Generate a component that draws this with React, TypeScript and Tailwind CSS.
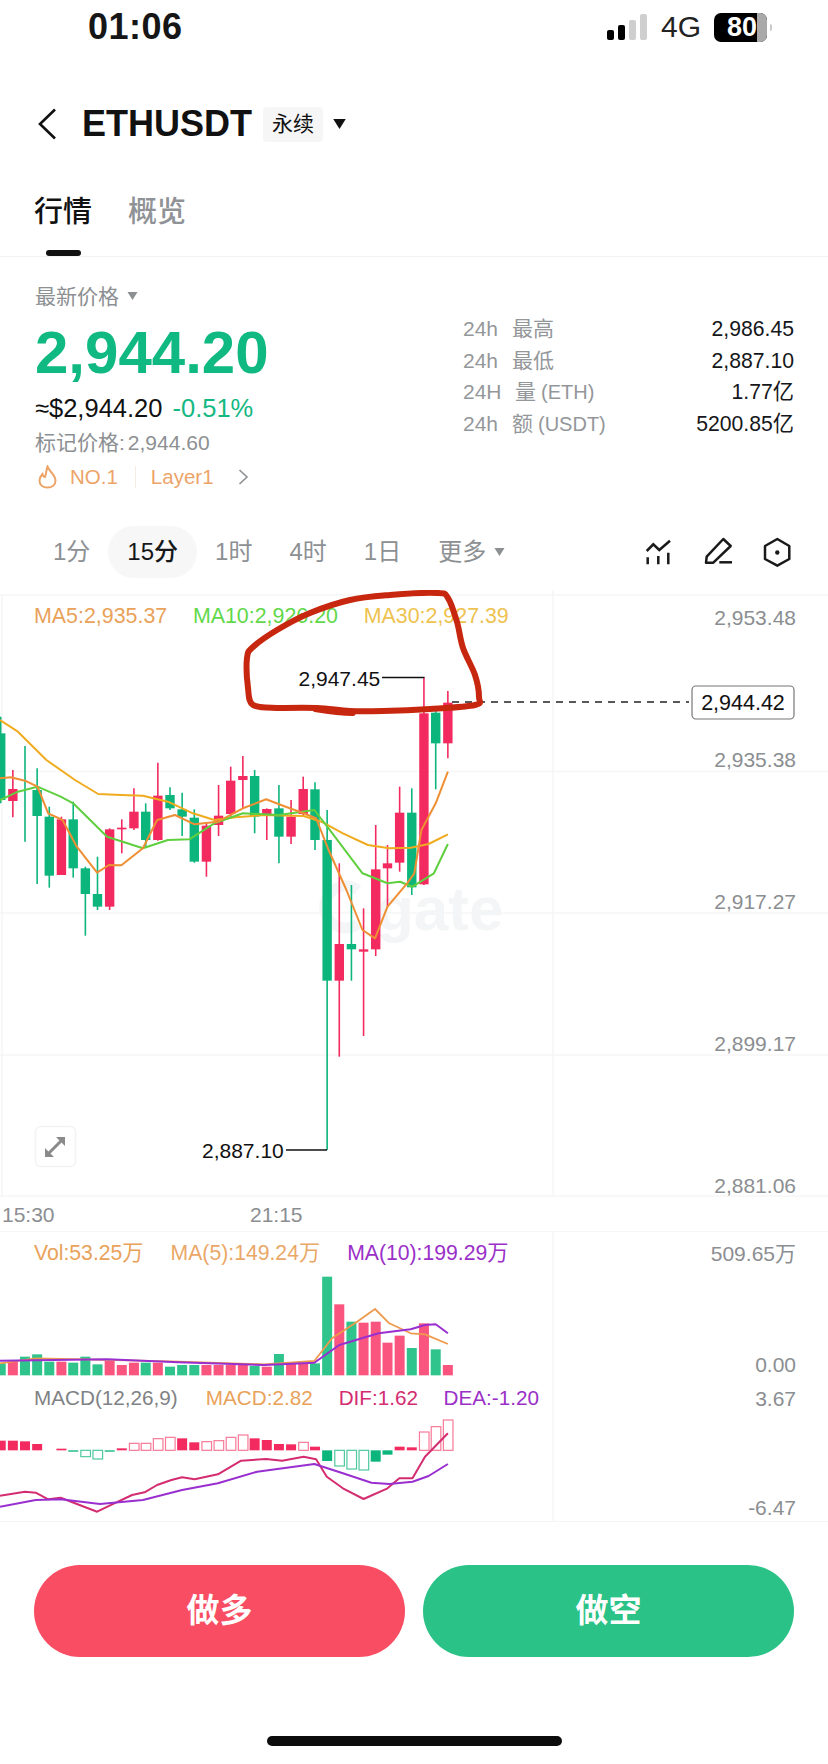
const G = "#10b981";
const GC = "#0cb57c";
const RC = "#f32a5f";

type C = [number, "R" | "G", number, number, number, number];
// x, colour, wick top, wick bottom, body top, body bottom (in chart units)
const candles: C[] = [
  [2, "G", 380, 640, 430, 630], [36, "R", 540, 682, 597, 633], [70, "G", 468, 755, 600, 600],
  [104, "G", 535, 882, 600, 678], [138, "G", 650, 893, 680, 857], [172, "R", 680, 855, 688, 855],
  [205, "G", 635, 863, 688, 835], [239, "G", 830, 1037, 835, 912], [273, "G", 800, 960, 912, 950],
  [307, "R", 715, 960, 718, 950], [341, "R", 688, 790, 713, 718], [375, "R", 595, 720, 665, 715],
  [408, "G", 640, 770, 665, 750], [442, "R", 518, 752, 617, 750], [476, "G", 592, 660, 615, 655],
  [510, "G", 608, 738, 658, 680], [544, "G", 658, 818, 683, 815], [578, "R", 700, 860, 707, 815],
  [612, "R", 585, 738, 677, 705], [646, "R", 530, 680, 572, 672], [680, "R", 498, 655, 558, 570],
  [713, "G", 540, 730, 558, 680], [747, "R", 655, 750, 657, 678], [781, "G", 585, 820, 655, 740],
  [815, "R", 630, 762, 680, 740], [849, "R", 560, 680, 597, 672], [882, "G", 577, 780, 598, 750],
  [916, "G", 660, 1680, 750, 1172], [950, "R", 820, 1400, 1062, 1172], [984, "G", 885, 1172, 1062, 1078],
  [1018, "R", 955, 1338, 1078, 1085], [1052, "R", 705, 1098, 838, 1078], [1085, "R", 765, 950, 820, 835],
  [1119, "R", 590, 845, 668, 818], [1153, "G", 595, 915, 668, 892], [1187, "R", 262, 885, 370, 883],
  [1220, "G", 350, 598, 368, 460], [1254, "R", 303, 505, 338, 460],
];
const ma30 = [[0, 390], [50, 425], [130, 510], [210, 570], [275, 612], [340, 615], [400, 617], [470, 635], [540, 670], [600, 690], [660, 682], [740, 675], [850, 678], [900, 695], [960, 730], [1030, 765], [1090, 775], [1150, 773], [1200, 762], [1254, 733]];
const ma5 = [[0, 565], [30, 562], [70, 572], [105, 590], [135, 670], [175, 690], [215, 770], [272, 848], [305, 825], [340, 826], [400, 775], [440, 690], [490, 675], [545, 703], [610, 695], [680, 655], [745, 628], [800, 650], [850, 670], [885, 685], [920, 780], [970, 900], [1015, 1020], [1050, 1045], [1085, 950], [1140, 880], [1160, 850], [1180, 720], [1220, 640], [1254, 545]];
const ma10 = [[0, 630], [50, 605], [105, 590], [170, 620], [205, 640], [300, 740], [400, 775], [470, 750], [530, 748], [600, 700], [680, 670], [780, 675], [880, 660], [920, 715], [1015, 850], [1085, 880], [1120, 875], [1155, 890], [1215, 850], [1254, 762]];
// Hand-drawn loop, in page pixels
const loop = [[277, 708], [253, 705], [248, 688], [247, 658], [253, 647], [277, 630], [310, 613], [350, 600], [390, 595], [437, 593], [448, 598], [457, 622], [463, 648], [475, 675], [479, 697], [475, 705], [430, 709], [383, 711], [350, 711], [317, 708], [277, 708]];

const vol: [number, "R" | "G", number][] = [
  [2, "G", 400], [36, "R", 395], [70, "G", 380], [104, "G", 373], [138, "G", 395], [172, "R", 395], [205, "G", 398], [239, "G", 380], [273, "G", 403], [307, "R", 393], [341, "R", 405], [375, "R", 398], [408, "G", 398], [442, "R", 398], [476, "G", 410], [510, "G", 405], [544, "G", 405], [578, "R", 405], [612, "R", 405], [646, "R", 405], [680, "R", 405], [713, "G", 408], [747, "R", 410], [781, "G", 372], [815, "R", 400], [849, "R", 400], [882, "G", 400], [916, "G", 140], [950, "R", 223], [984, "G", 275], [1018, "R", 278], [1052, "R", 275], [1085, "R", 338], [1119, "R", 317], [1153, "G", 354], [1187, "R", 280], [1220, "G", 358], [1254, "R", 405],
];
const volMa5 = [[0, 400], [100, 385], [240, 388], [500, 395], [740, 403], [880, 393], [930, 325], [1000, 275], [1050, 237], [1090, 280], [1150, 310], [1190, 313], [1254, 342]];
const volMa10 = [[0, 392], [300, 388], [500, 397], [740, 405], [880, 398], [950, 345], [1060, 310], [1150, 298], [1190, 285], [1220, 283], [1254, 310]];

const macd: [number, "R" | "G", number, boolean][] = [
  [2, "R", 632, true], [36, "R", 632, true], [70, "R", 634, true], [104, "R", 642, true], [172, "R", 656, true], [205, "G", 665, true], [239, "G", 680, false], [273, "G", 687, false], [307, "G", 665, true], [341, "R", 655, true], [375, "R", 640, false], [408, "R", 640, false], [442, "R", 626, false], [476, "R", 622, false], [510, "R", 625, true], [544, "R", 637, true], [578, "R", 635, false], [612, "R", 632, false], [646, "R", 622, false], [680, "R", 615, false], [713, "R", 625, true], [747, "R", 630, true], [781, "R", 642, true], [815, "R", 643, true], [849, "R", 637, false], [882, "R", 650, true], [916, "G", 693, true], [950, "G", 708, false], [984, "G", 717, false], [1018, "G", 720, false], [1052, "G", 695, true], [1085, "G", 674, true], [1119, "R", 650, true], [1153, "R", 652, true], [1187, "R", 606, false], [1220, "R", 590, false], [1254, "R", 570, false],
];
const dif = [[0, 797], [70, 785], [100, 788], [135, 808], [170, 803], [210, 820], [272, 845], [320, 820], [370, 795], [405, 787], [440, 765], [480, 750], [510, 742], [545, 748], [610, 733], [675, 692], [745, 687], [790, 692], [850, 680], [885, 688], [915, 740], [960, 775], [1018, 807], [1085, 775], [1118, 745], [1155, 745], [1190, 680], [1254, 610]];
const dea = [[0, 830], [100, 810], [170, 808], [280, 822], [400, 810], [510, 780], [610, 760], [720, 725], [880, 702], [960, 730], [1040, 758], [1090, 762], [1155, 755], [1200, 738], [1254, 702]];

const X = (x: number) => x / 2.8;
const pts = (a: number[][], y0: number) => a.map(([x, y]) => `${X(x).toFixed(1)},${(y / 3 + y0).toFixed(1)}`).join(" ");

// Catmull-Rom curve through the points, for smooth hand-drawn strokes
function smooth(p: number[][]) {
  let d = `M${p[0][0]} ${p[0][1]}`;
  for (let i = 0; i < p.length - 1; i++) {
    const a = p[Math.max(i - 1, 0)];
    const b = p[i];
    const c = p[i + 1];
    const e = p[Math.min(i + 2, p.length - 1)];
    d += `C${(b[0] + (c[0] - a[0]) / 6).toFixed(1)} ${(b[1] + (c[1] - a[1]) / 6).toFixed(1)} ${(c[0] - (e[0] - b[0]) / 6).toFixed(1)} ${(c[1] - (e[1] - b[1]) / 6).toFixed(1)} ${c[0]} ${c[1]}`;
  }
  return d;
}

function Tri({ w, h, color }: { w: number; h: number; color: string }) {
  return (
    <svg width={w} height={h} viewBox="0 0 10 8" className="shrink-0">
      <path d="M0 0H10L5 8Z" fill={color} />
    </svg>
  );
}

function AxisLabel({ y, children }: { y: number; children: string }) {
  return (
    <text x={796} y={y + 7.5} textAnchor="end" fontSize={21} fill="#8b8e91">
      {children}
    </text>
  );
}

function StatRow({ a, b, c, v, wide }: { a: string; b: string; c?: string; v: string; wide?: boolean }) {
  return (
    <div className="flex h-[31.67px] items-center text-[21px] text-[#94979a]">
      <span className={wide ? "w-[52px]" : "w-[49px]"}>{a}</span>
      <span>{b}</span>
      {c && <span className="ml-[5px] text-[20px]">{c}</span>}
      <span className="ml-auto text-[21.2px] text-[#15171a]">{v}</span>
    </div>
  );
}

export default function App() {
  return (
    <div className="relative h-[1764px] w-[828px] overflow-hidden bg-white font-['Liberation_Sans','Noto_Sans_CJK_SC',sans-serif] text-[#111]">
      {/* Status bar */}
      <div className="flex h-[54px] items-center pl-[88px] pr-[56px]">
        <span className="text-[36px] font-bold leading-none tracking-[0.5px] text-[#161616]">01:06</span>
        <div className="ml-auto flex items-end gap-[4px] self-center">
          <span className="h-[10px] w-[7px] rounded-[2px] bg-black" />
          <span className="h-[15px] w-[7px] rounded-[2px] bg-black" />
          <span className="h-[20px] w-[7px] rounded-[2px] bg-[#cfcfcf]" />
          <span className="h-[26px] w-[7px] rounded-[2px] bg-[#cfcfcf]" />
        </div>
        <span className="ml-[14px] text-[30px] leading-none text-[#222]">4G</span>
        <div className="ml-[13px] flex h-[29px] w-[53px] items-center overflow-hidden rounded-[7px] bg-black">
          <span className="flex w-[43px] justify-end text-[27px] font-bold leading-none text-white">80</span>
          <span className="ml-auto h-full w-[10px] bg-[#a9a9a9]" />
        </div>
        <span className="ml-[3px] h-[7px] w-[2px] rounded-r bg-[#c9c9c9]" />
      </div>

      {/* Header */}
      <div className="flex h-[140px] items-center pl-[37px]">
        <svg width="20" height="32" viewBox="0 0 20 32" fill="none">
          <path d="M18 1.500 3 16l15 14.500" stroke="#111" strokeWidth="2.600" />
        </svg>
        <span className="ml-[25px] text-[36px] font-bold leading-none">ETHUSDT</span>
        <span className="ml-[11px] flex h-[35px] w-[60px] items-center justify-center rounded-[4px] bg-[#f6f6f6] text-[21px]">永续</span>
        <span className="ml-[9px]">
          <Tri w={15} h={10} color="#111" />
        </span>
      </div>

      {/* Tabs */}
      <div className="h-[63px] border-b border-[#f3f3f3]">
        <div className="flex gap-[36px] pl-[34px] text-[29px] leading-[36px]">
          <div className="flex flex-col items-center">
            <span className="font-medium">行情</span>
            <span className="mt-[20px] h-[6px] w-[35px] rounded-[3px] bg-[#111]" />
          </div>
          <span className="font-medium text-[#8f9296]">概览</span>
        </div>
      </div>

      {/* Price info */}
      <div className="flex h-[233px]">
        <div className="w-[428px] pl-[35px]">
          <div className="mt-[27px] flex h-[24px] items-center gap-[8px] text-[21px] leading-none text-[#8d9093]">
            最新价格
            <Tri w={11} h={8} color="#8d9093" />
          </div>
          <div className="mt-[15px] h-[60px] text-[60px] font-bold leading-[60px]" style={{ color: G }}>2,944.20</div>
          <div className="mt-[11px] flex h-[30px] items-center text-[25.500px] leading-none">
            <span>≈$2,944.20</span>
            <span className="ml-[10px] text-[#14b881]">-0.51%</span>
          </div>
          <div className="mt-[5px] flex h-[26px] items-center text-[21px] leading-none text-[#8d9093]">
            <span>标记价格:</span>
            <span className="ml-[3px]">2,944.60</span>
          </div>
          <div className="mt-[9px] flex h-[26px] items-center text-[20.500px] leading-none text-[#eda468]">
            <svg width="19" height="24" viewBox="0 0 19 24" fill="none" className="ml-[3px]">
              <path d="M9.500 1.500C10.500 6 17.500 9.500 17.500 15.500C17.500 20 14 22.500 9.500 22.500C5 22.500 1.500 20 1.500 15.500C1.500 12.500 3.200 10.500 4.500 9C5 11 6 12 7 12C8.500 9 8 5 9.500 1.500Z" stroke="#eda468" strokeWidth="2" />
            </svg>
            <span className="ml-[13px]">NO.1</span>
            <span className="ml-[17px] h-[22px] w-px bg-[#f5ece2]" />
            <span className="ml-[15px]">Layer1</span>
            <svg width="11" height="16" viewBox="0 0 11 16" fill="none" className="ml-[24px]">
              <path d="M1.500 1 9 8l-7.500 7" stroke="#8d9093" strokeWidth="1.600" />
            </svg>
          </div>
        </div>
        <div className="ml-[35px] mt-[56px] w-[331px]">
          <StatRow a="24h" b="最高" v="2,986.45" />
          <StatRow a="24h" b="最低" v="2,887.10" />
          <StatRow a="24H" b="量" c="(ETH)" v="1.77亿" wide />
          <StatRow a="24h" b="额" c="(USDT)" v="5200.85亿" />
        </div>
      </div>

      {/* Timeframes */}
      <div className="mt-[36px] flex h-[52px] items-center pl-[35px] text-[24px] leading-none text-[#8d9093]">
        <span className="px-[18px]">1分</span>
        <span className="flex h-[52px] items-center rounded-full bg-[#f7f7f7] px-[19px] font-medium text-[#15171a]">15分</span>
        <span className="px-[18px]">1时</span>
        <span className="ml-[1px] px-[18px]">4时</span>
        <span className="ml-[1px] px-[18px]">1日</span>
        <span className="flex items-center gap-[8px] pl-[19px]">
          更多
          <Tri w={11} h={8} color="#8d9093" />
        </span>
        <svg width="160" height="45" viewBox="640 530 160 45" fill="none" stroke="#1a1a1a" strokeWidth="2.500" className="ml-auto mr-[28px]">
          <path d="M646.700 551 653.300 544.300 659.300 550 670 540.700" />
          <path d="M647.700 557.300V564.300M658.300 556V564.300M668.300 552.700V564.300" />
          <path d="M706.700 556.700 723.300 539 730.700 546 713.300 562.700H706Z" strokeLinejoin="round" />
          <path d="M719.300 562.300H732" />
          <path d="M777.300 539 789.300 546V559L777.300 565.700 765 559V546Z" strokeLinejoin="round" />
          <circle cx="777.300" cy="552.500" r="2.200" fill="#1a1a1a" stroke="none" />
        </svg>
      </div>

      {/* Main chart */}
      <div className="relative mt-[12px] h-[607px]">
        <div className="flex h-[54px] items-center gap-[25.700px] pl-[34px] text-[21.400px] leading-none">
          <span className="text-[#e9a25a]">MA5:2,935.37</span>
          <span className="text-[#62d84a]">MA10:2,926.20</span>
          <span className="text-[#eec24f]">MA30:2,927.39</span>
        </div>
        <svg className="absolute inset-0" width="828" height="607" viewBox="0 590 828 607" fill="none">
          <g stroke="#f6f6f6" strokeWidth="1.500">
            <path d="M0 595H828M0 771.500H828M0 913H828M0 1055H828M0 1196H828M553 590V1197M2 595V1197" />
          </g>
          <text x="376" y="930" fontSize="62" fontWeight="700" fill="#f3f5f6">gate</text>
          <path d="M358 890a21 21 0 1 0 0 34" stroke="#f3f5f6" strokeWidth="11" />
          <AxisLabel y={617}>2,953.48</AxisLabel>
          <AxisLabel y={759}>2,935.38</AxisLabel>
          <AxisLabel y={901}>2,917.27</AxisLabel>
          <AxisLabel y={1043}>2,899.17</AxisLabel>
          <AxisLabel y={1185}>2,881.06</AxisLabel>
          {candles.map(([x, c, wt, wb, bt, bb]) => {
            const col = c === "R" ? RC : GC;
            const cx = X(x);
            return (
              <g key={x}>
                <line x1={cx} x2={cx} y1={wt / 3 + 590} y2={wb / 3 + 590} stroke={col} strokeWidth="1.600" />
                {bb > bt && <rect x={cx - 4.7} y={bt / 3 + 590} width="9.400" height={(bb - bt) / 3} fill={col} />}
              </g>
            );
          })}
          <polyline points={pts(ma30, 590)} stroke="#f0ab1f" strokeWidth="2" strokeLinejoin="round" />
          <polyline points={pts(ma10, 590)} stroke="#5fcf3f" strokeWidth="2" strokeLinejoin="round" />
          <polyline points={pts(ma5, 590)} stroke="#ee8f33" strokeWidth="2" strokeLinejoin="round" />
          <path d="M452 702H689" stroke="#222" strokeWidth="1.300" strokeDasharray="7 6" />
          <rect x="692" y="686" width="102" height="33" rx="4" fill="#fff" stroke="#777" strokeWidth="1.200" />
          <text x="743" y="710" textAnchor="middle" fontSize="21.500" fill="#111">2,944.42</text>
          <text x="298.500" y="685.500" fontSize="21" fill="#111">2,947.45</text>
          <path d="M382 677.500H424.500" stroke="#111" strokeWidth="1.300" />
          <text x="202" y="1158" fontSize="21" fill="#111">2,887.10</text>
          <path d="M286 1150H327" stroke="#111" strokeWidth="1.300" />
          <rect x="35.500" y="1126.500" width="40" height="40" rx="5" fill="#fff" stroke="#f3f3f3" strokeWidth="1.500" />
          <path d="M47 1155 62 1140" stroke="#8a8a8a" strokeWidth="3" />
          <path d="M56 1137H65V1146ZM45 1148V1157H54Z" fill="#8a8a8a" />
          <path d={smooth(loop)} stroke="#c8270f" strokeWidth="6" strokeLinejoin="round" strokeLinecap="round" />
          <path d="M315 709.500C330 712 340 713.500 353 713.500" stroke="#c8270f" strokeWidth="5" strokeLinecap="round" />
        </svg>
      </div>

      {/* Time axis */}
      <div className="flex h-[35px] items-center border-b border-[#f5f5f5] pl-[2px] text-[21px] leading-none text-[#8b8e91]">
        <span className="w-[248px]">15:30</span>
        <span>21:15</span>
      </div>

      {/* Volume */}
      <div className="relative h-[148px]">
        <div className="flex h-[42px] items-center gap-[27px] pl-[34px] text-[21.200px] leading-none">
          <span className="text-[#e9a25a]">Vol:53.25万</span>
          <span className="text-[#eaa868]">MA(5):149.24万</span>
          <span className="text-[#9a30c8]">MA(10):199.29万</span>
        </div>
        <svg className="absolute inset-0" width="828" height="148" viewBox="0 1232 828 148" fill="none">
          <path d="M553 1232V1380" stroke="#f6f6f6" strokeWidth="1.500" />
          <AxisLabel y={1253}>509.65万</AxisLabel>
          <AxisLabel y={1364}>0.00</AxisLabel>
          {vol.map(([x, c, t]) => (
            <rect key={x} x={X(x) - 5} y={t / 3 + 1230} width="10" height={(436 - t) / 3} fill={c === "R" ? "#f9557e" : "#30c48d"} />
          ))}
          <polyline points={pts(volMa5, 1230)} stroke="#ee9a4d" strokeWidth="1.800" strokeLinejoin="round" />
          <polyline points={pts(volMa10, 1230)} stroke="#9a2fd0" strokeWidth="2" strokeLinejoin="round" />
        </svg>
      </div>

      {/* MACD */}
      <div className="relative h-[142px] border-b border-[#f5f5f5]">
        <div className="flex h-[36px] items-center pl-[34px] text-[20.700px] leading-none">
          <span className="text-[#7f8285]">MACD(12,26,9)</span>
          <span className="ml-[28px] text-[#e9a25a]">MACD:2.82</span>
          <span className="ml-[26px] text-[#d42c70]">DIF:1.62</span>
          <span className="ml-[25.500px] text-[#9a30c8]">DEA:-1.20</span>
        </div>
        <svg className="absolute inset-0" width="828" height="142" viewBox="0 1380 828 142" fill="none">
          <path d="M553 1380V1522" stroke="#f6f6f6" strokeWidth="1.500" />
          <AxisLabel y={1398}>3.67</AxisLabel>
          <AxisLabel y={1507.5}>-6.47</AxisLabel>
          {macd.map(([x, c, v, fill]) => {
            const col = c === "R" ? RC : GC;
            const top = Math.min(v, 661) / 3 + 1230;
            const bottom = Math.max(v, 661) / 3 + 1230;
            return fill ? (
              <rect key={x} x={X(x) - 5} y={top} width="10" height={bottom - top} fill={col} />
            ) : (
              <rect key={x} x={X(x) - 4.5} y={top} width="9.600" height={bottom - top} fill="#fff" stroke={c === "R" ? "#f77a98" : "#4fc9a0"} strokeWidth="1.200" />
            );
          })}
          <polyline points={pts(dif, 1230)} stroke="#d42c70" strokeWidth="2" strokeLinejoin="round" />
          <polyline points={pts(dea, 1230)} stroke="#9a2fd0" strokeWidth="2" strokeLinejoin="round" />
        </svg>
      </div>

      {/* Buttons */}
      <div className="mt-[43px] flex gap-[18px] px-[34px]">
        <div className="flex h-[92px] flex-1 items-center justify-center rounded-full bg-[#f84d62] text-[33px] font-bold text-white">做多</div>
        <div className="flex h-[92px] flex-1 items-center justify-center rounded-full bg-[#2ac286] text-[33px] font-bold text-white">做空</div>
      </div>

      {/* Home indicator */}
      <div className="mt-[79px] flex justify-center">
        <span className="h-[10px] w-[295px] rounded-full bg-[#0c0c0c]" />
      </div>
    </div>
  );
}
